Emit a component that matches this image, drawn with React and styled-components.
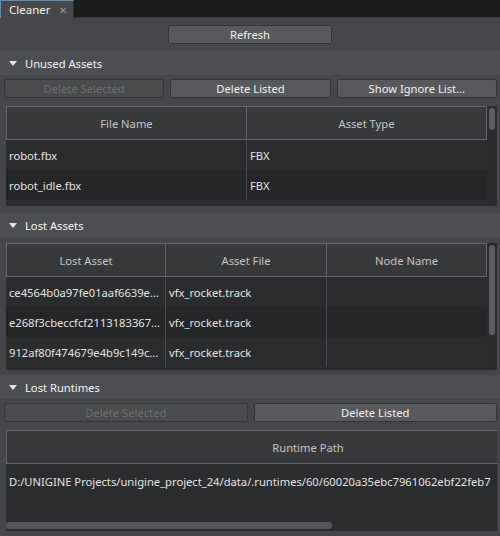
import React from "react";
import styled, { createGlobalStyle } from "styled-components";

const Global = createGlobalStyle`
  html, body { margin: 0; padding: 0; background: #454649; }
  body { font-family: "Noto Sans", "Open Sans", sans-serif; font-size: 11px; }
`;

const Window = styled.div`
  width: 500px;
  height: 536px;
  display: flex;
  flex-direction: column;
  background: #454649;
  overflow: hidden;
`;

const TabBar = styled.div`
  height: 17px;
  display: flex;
  background: #1c1c1d;
  border-bottom: 1px solid #38393b;
`;

const Tab = styled.div`
  width: 74px;
  box-sizing: border-box;
  display: flex;
  align-items: center;
  justify-content: space-between;
  padding: 0 6px 0 8px;
  background: #47484b;
  border-top: 1px solid #5d8fb3;
  border-left: 1px solid #5d8fb3;
  border-right: 1px solid #2a2a2b;
  color: #f0f0f0;
  font-size: 11.5px;
  margin-bottom: -1px;
`;

const Close = styled.span`
  color: #9a9b9d;
  font-size: 10px;
`;

const Center = styled.div`
  display: flex;
  justify-content: center;
  padding-top: 7px;
`;

const Button = styled.button`
  box-sizing: border-box;
  height: 19px;
  width: ${(p) => p.$w || "auto"};
  border: 1px solid #333436;
  border-radius: 2px;
  background: ${(p) => (p.disabled ? "#4a4b4d" : "#58595c")};
  color: ${(p) => (p.disabled ? "#6c6d70" : "#f2f2f2")};
  font-family: inherit;
  font-size: 11.2px;
  padding: 0;
  line-height: 17px;
`;

const SectionHeader = styled.div`
  height: 24px;
  margin-top: ${(p) => p.$mt}px;
  display: flex;
  align-items: center;
  gap: 8px;
  padding-left: 9px;
  background: #4d4e51;
  color: #f4f4f4;
  font-size: 11.2px;
`;

const Triangle = styled.span`
  width: 0;
  height: 0;
  border-left: 4px solid transparent;
  border-right: 4px solid transparent;
  border-top: 5px solid #e6e6e6;
`;

const ButtonRow = styled.div`
  display: grid;
  grid-template-columns: repeat(${(p) => p.$n}, 1fr);
  gap: 6px;
  padding: 4px 3px 0 4px;
`;

const TableFrame = styled.div`
  display: flex;
  height: ${(p) => p.$h}px;
  margin: ${(p) => p.$mt}px 3px 0 6px;
`;

const Viewport = styled.div`
  flex: 1;
  position: relative;
  background: #2c2d2f;
  overflow: hidden;
  display: flex;
  flex-direction: column;
`;

const Grid = styled.div`
  display: grid;
  grid-template-columns: ${(p) => p.$cols};
  width: ${(p) => p.$width || "100%"};
`;

const HeaderCell = styled.div`
  height: 34px;
  box-sizing: border-box;
  display: flex;
  align-items: center;
  justify-content: center;
  background: #38393b;
  border: 1px solid #646568;
  margin-left: ${(p) => (p.$first ? 0 : -1)}px;
  color: #c4c5c7;
  font-size: 11.2px;
`;

const Cell = styled.div`
  height: 30px;
  box-sizing: border-box;
  display: flex;
  align-items: center;
  padding-left: 3px;
  background: ${(p) => (p.$alt ? "#252628" : "#2b2c2e")};
  border-right: ${(p) => (p.$last ? "none" : "1px solid #4b4c4f")};
  color: #e4e4e4;
  font-size: 11.2px;
  white-space: nowrap;
  overflow: hidden;
`;

const Body = styled.div`
  flex: 1;
  display: grid;
  grid-template-columns: ${(p) => p.$cols};
  align-content: start;
`;

const Filler = styled.div`
  border-right: ${(p) => (p.$last ? "none" : "1px solid #4b4c4f")};
`;

const VScroll = styled.div`
  width: 10px;
  background: #2a2b2d;
  display: flex;
  justify-content: center;
  padding-top: 2px;
  box-sizing: border-box;
`;

const VThumb = styled.div`
  width: 6px;
  height: ${(p) => p.$h}px;
  border-radius: 3px;
  background: #5b5c5f;
`;

const HScroll = styled.div`
  position: absolute;
  left: 0;
  right: 0;
  bottom: 2px;
  height: 7px;
  display: flex;
`;

const HThumb = styled.div`
  width: 326px;
  height: 7px;
  border-radius: 3px;
  background: #55565a;
`;

function Table({ cols, headers, rows, height, mt, thumb }) {
  const tmpl = cols.join(" ");
  return (
    <TableFrame $h={height} $mt={mt}>
      <Viewport>
        <Grid $cols={tmpl}>
          {headers.map((h, i) => (
            <HeaderCell key={h} $first={i === 0}>
              {h}
            </HeaderCell>
          ))}
        </Grid>
        <Body $cols={tmpl}>
          {rows.map((r, ri) =>
            r.map((c, ci) => (
              <Cell key={ri + "-" + ci} $alt={ri % 2 === 1} $last={ci === r.length - 1}>
                {c}
              </Cell>
            ))
          )}
          {headers.map((h, i) => (
            <Filler key={"f" + i} $last={i === headers.length - 1} />
          ))}
        </Body>
      </Viewport>
      <VScroll>
        <VThumb $h={thumb} />
      </VScroll>
    </TableFrame>
  );
}

const RuntimeFrame = styled.div`
  height: 101px;
  margin: 8px 3px 0 6px;
  display: flex;
`;

const RuntimeRowText = styled.div`
  height: 34px;
  display: flex;
  align-items: center;
  padding-left: 3px;
  color: #e4e4e4;
  font-size: 11.2px;
  white-space: nowrap;
`;

export default function App() {
  return (
    <Window>
      <Global />
      <TabBar>
        <Tab>
          <span>Cleaner</span>
          <Close>✕</Close>
        </Tab>
      </TabBar>
      <Center>
        <Button $w="164px">Refresh</Button>
      </Center>

      <SectionHeader $mt={7}>
        <Triangle />
        Unused Assets
      </SectionHeader>
      <ButtonRow $n={3}>
        <Button disabled>Delete Selected</Button>
        <Button>Delete Listed</Button>
        <Button>Show Ignore List...</Button>
      </ButtonRow>
      <Table
        mt={8}
        height={100}
        cols={["241px", "1fr"]}
        headers={["File Name", "Asset Type"]}
        rows={[
          ["robot.fbx", "FBX"],
          ["robot_idle.fbx", "FBX"],
        ]}
        thumb={22}
      />

      <SectionHeader $mt={7}>
        <Triangle />
        Lost Assets
      </SectionHeader>
      <Table
        mt={6}
        height={127}
        cols={["160px", "161px", "1fr"]}
        headers={["Lost Asset", "Asset File", "Node Name"]}
        rows={[
          ["ce4564b0a97fe01aaf6639e...", "vfx_rocket.track", ""],
          ["e268f3cbeccfcf2113183367...", "vfx_rocket.track", ""],
          ["912af80f474679e4b9c149c...", "vfx_rocket.track", ""],
        ]}
        thumb={90}
      />

      <SectionHeader $mt={5}>
        <Triangle />
        Lost Runtimes
      </SectionHeader>
      <ButtonRow $n={2}>
        <Button disabled>Delete Selected</Button>
        <Button>Delete Listed</Button>
      </ButtonRow>
      <RuntimeFrame>
        <Viewport>
          <Grid $cols="604px" $width="604px">
            <HeaderCell $first>Runtime Path</HeaderCell>
          </Grid>
          <RuntimeRowText>
            D:/UNIGINE Projects/unigine_project_24/data/.runtimes/60/60020a35ebc7961062ebf22feb7
          </RuntimeRowText>
          <HScroll>
            <HThumb />
          </HScroll>
        </Viewport>
      </RuntimeFrame>
    </Window>
  );
}
